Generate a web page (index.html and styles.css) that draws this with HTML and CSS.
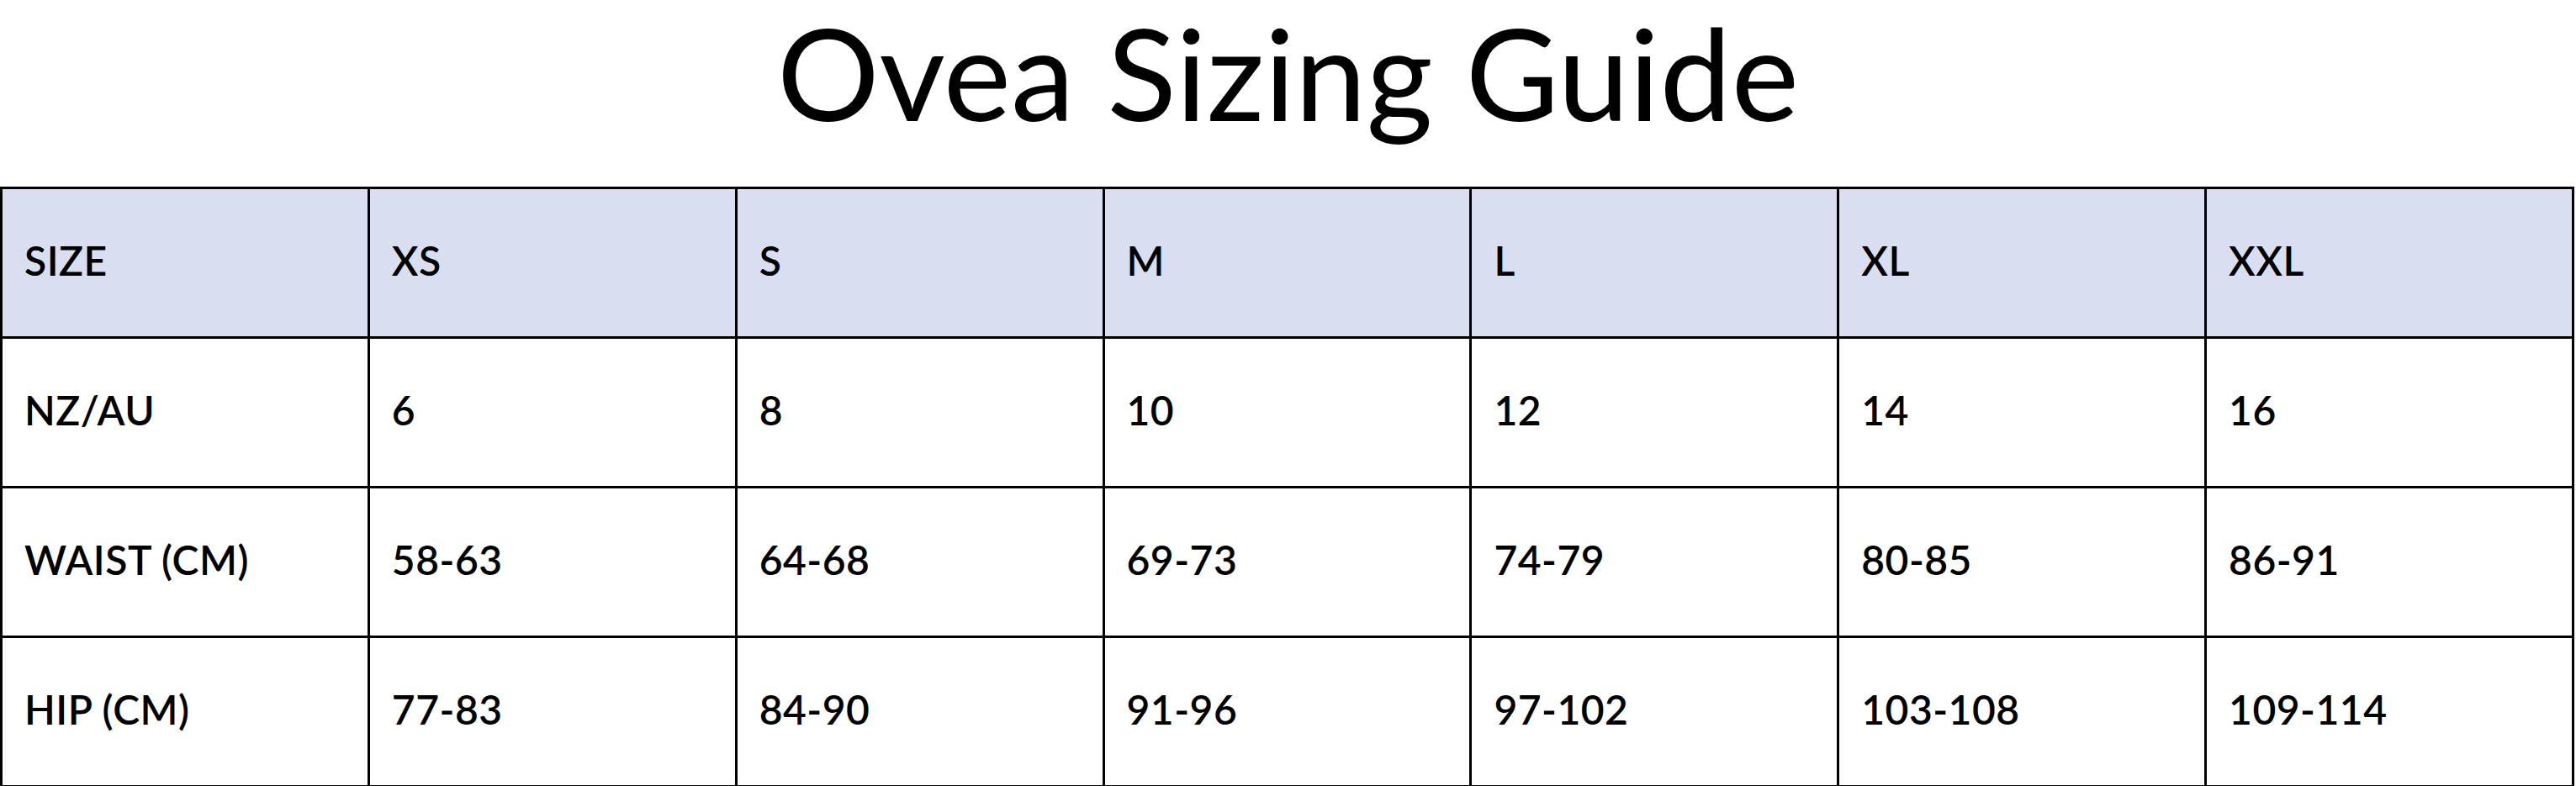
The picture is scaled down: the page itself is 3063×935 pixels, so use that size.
FILE: index.html
```html
<!DOCTYPE html>
<html lang="en">
<head>
<meta charset="utf-8">
<title>Ovea Sizing Guide</title>
<link rel="stylesheet" href="styles.css">
</head>
<body>
<div class="page">
  <h1 class="title">Ovea Sizing Guide</h1>
  <table class="sizes">
    <thead>
      <tr class="head-row">
        <th>SIZE</th><th>XS</th><th>S</th><th>M</th><th>L</th><th>XL</th><th>XXL</th>
      </tr>
    </thead>
    <tbody>
      <tr><td>NZ/AU</td><td>6</td><td>8</td><td>10</td><td>12</td><td>14</td><td>16</td></tr>
      <tr><td>WAIST (CM)</td><td>58-63</td><td>64-68</td><td>69-73</td><td>74-79</td><td>80-85</td><td>86-91</td></tr>
      <tr><td>HIP (CM)</td><td>77-83</td><td>84-90</td><td>91-96</td><td>97-102</td><td>103-108</td><td>109-114</td></tr>
    </tbody>
  </table>
</div>
</body>
</html>
```

FILE: styles.css
```css
html, body {
  margin: 0;
  padding: 0;
  background: #ffffff;
}

.page {
  width: 3063px;
  font-family: "Lato", "Noto Sans", sans-serif;
  color: #000;
}

.title {
  margin: 0;
  height: 222px;
  padding-top: 9px;
  box-sizing: border-box;
  font-size: 152px;
  line-height: 1;
  font-weight: 400;
  text-align: center;
}

.sizes {
  width: 3061px;
  margin: 0;
  border-collapse: collapse;
  table-layout: fixed;
}

.sizes th,
.sizes td {
  border: 3px solid #000;
  height: 169px;
  padding: 0 0 6px 26px;
  text-align: left;
  vertical-align: middle;
  font-size: 48px;
  font-weight: 600;
  letter-spacing: 0.5px;
}

.head-row th {
  background: #d9dff0;
}
```
